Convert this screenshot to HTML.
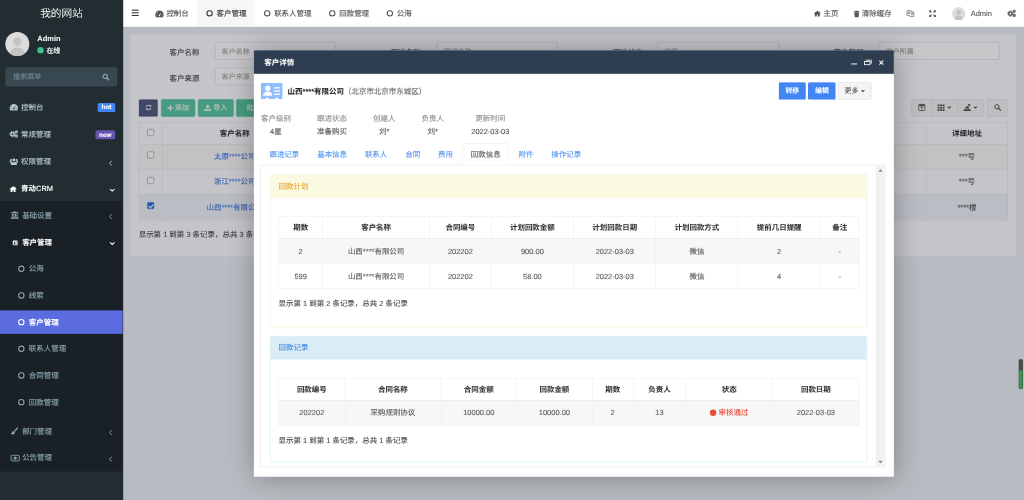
<!DOCTYPE html>
<html lang="zh-CN">
<head>
<meta charset="utf-8">
<title>我的网站</title>
<style>
*{box-sizing:border-box;margin:0;padding:0}
html,body{width:1024px;height:500px;overflow:hidden;background:#222d32}
body{-webkit-text-stroke:.22px;text-rendering:geometricPrecision;font-family:"Liberation Sans","Noto Sans CJK SC",sans-serif;font-size:14px;color:#333;line-height:1.42857}
#stage{filter:blur(.3px);position:absolute;left:0;top:0;width:1920px;height:938px;transform:scale(.533333);transform-origin:0 0;overflow:hidden;background:#ecf0f5}
a{text-decoration:none;color:inherit}
ul{list-style:none}
b,th,.bold{-webkit-text-stroke:.05px}
/* ---------- sidebar ---------- */
.i{display:inline-block;vertical-align:middle;overflow:visible}
#side{position:absolute;left:0;top:0;width:230.7px;z-index:5;height:938px;background:#222d32;color:#fff}
#logo{height:50px;line-height:50px;text-align:center;font-size:20px;color:#fff;font-weight:300}
#user{position:relative;height:65px}
#user .av{position:absolute;left:10px;top:10px;width:45px;height:45px;border-radius:50%;background:#dcdcdc;overflow:hidden}
#user .nm{-webkit-text-stroke:.05px;position:absolute;left:70px;top:12px;font-weight:bold;font-size:14px;line-height:20px}
#user .st{position:absolute;left:70px;top:35px;font-size:13px;line-height:20px;font-weight:500}
#user .st i{display:inline-block;width:12px;height:12px;border-radius:50%;background:#3fc08c;margin-right:5px;vertical-align:-1px}
#sform{position:absolute;left:10px;top:125.5px;width:210px;height:36.5px;background:#374850;border-radius:3px;color:#6f8893;font-size:13px;line-height:36px;padding-left:15px}
#sform .i{position:absolute;right:15px;top:12px;color:#a9bac2}
#menu{position:absolute;left:0;top:0;width:230px}
#menu li{position:absolute;left:0;width:230px;height:44px;line-height:44px;font-size:14px;color:#b8c7ce;padding-left:18px;white-space:nowrap;margin-top:-22px}
#menu li.on{color:#fff;font-weight:bold;-webkit-text-stroke:.05px}
#menu li.l2{padding-left:20px;color:#8aa4af}
#menu li.l2.on{color:#fff}
#menu li.l3{padding-left:34px;color:#8aa4af}
#menu li.l3 .ic{width:20px}
#menu li.act{background:#5a6ce0;color:#fff;font-weight:bold;-webkit-text-stroke:.05px}
#menu .ic{display:inline-block;width:21.5px;text-align:left;vertical-align:top;height:44px}
#menu .ic .i{vertical-align:-2px}
#menu .bd{position:absolute;right:14px;top:14.5px;height:17px;line-height:17px;padding:0 7px;border-radius:3px;font-size:12px;font-weight:bold;color:#fff}
#menu .ar{position:absolute;right:19px;top:3px;height:44px}
#menu .ar .i{vertical-align:-1px}
#subbg{position:absolute;left:0;top:376.5px;width:230px;height:507.5px;background:#1a2126}
/* ---------- topbar ---------- */
#top{position:absolute;left:230px;top:0;width:1690px;height:50px;background:#fff;color:#333;font-size:14px}
#top .hb{position:absolute;left:17px;top:18px;width:13px;height:12px}
#top .hb i{display:block;height:2px;background:#333;margin-bottom:3px}
#tabs{position:absolute;left:45px;top:0;height:50px;display:flex}
#tabs .t{height:50px;line-height:50px;padding:0 15px;color:#555;white-space:nowrap}
#tabs .t.on{background:#f6f6f6;color:#333}
#tabs .t .fw{display:inline-block;width:18px;text-align:center;margin-right:4px}
.co{display:inline-block;width:12px;height:12px;border:2px solid currentColor;border-radius:50%;vertical-align:-1px}
#tr{position:absolute;right:0;top:0;height:50px;line-height:50px;color:#555;white-space:nowrap}
#tr .it{position:absolute;top:0;height:50px;line-height:50px}
#tr .it .i{vertical-align:-2px}
/* ---------- main content ---------- */
#main{position:absolute;left:230px;top:50px;width:1690px;height:888px;background:#ecf0f5;overflow:hidden}
#pn{position:absolute;left:15px;top:15px;width:1660px;height:416px;background:#fbfcff;border-radius:3px}
.lb{position:absolute;font-size:14px;color:#505050;height:33px;line-height:33px;white-space:nowrap;margin-top:3.5px}
.inp{position:absolute;height:33px;border:1px solid #d2d6de;border-radius:3px;background:#fff;font-size:13px;color:#aaa;line-height:34px;padding-left:12px;white-space:nowrap;overflow:hidden}
.btn{position:absolute;height:32.5px;line-height:30.5px;border:1px solid transparent;border-radius:3px;font-size:13px;text-align:center;white-space:nowrap;color:#fff}
.bg{background:#5cc7a3;border-color:#55bd9a;color:rgba(255,255,255,.85)}
.bd2{background:#f4f4f4;border-color:#ddd;color:#505050}
.btn .i{vertical-align:-1.5px}
.caret{display:inline-block;width:0;height:0;border:4px solid transparent;border-top:4px solid currentColor;border-bottom:0;vertical-align:2px;margin-left:1px}
#tb1{position:absolute;left:15px;top:164px;width:1630px;border-collapse:collapse;font-size:14px;color:#555}
#tb1 td,#tb1 th{border:1px solid #e7e7e7;text-align:center;padding:0;height:47.3px;white-space:nowrap}
#tb1 th{height:41px;font-weight:bold;color:#333;padding-top:2.5px}
#tb1 tr.sel td{background:#f0f3fa}
#tb1 tr.odd td{background:#f9f9f9}
#tb1 a{color:#4b7ee0}
.cb{display:inline-block;width:13px;height:13px;border:1px solid #8a8a8a;border-radius:2.5px;background:#fff;vertical-align:middle;position:relative;top:-3.5px}
.cb.ck{background:#2b6fe0;border-color:#2b6fe0}
.cb.ck:after{content:"";position:absolute;left:3.2px;top:.5px;width:3.5px;height:7px;border:solid #fff;border-width:0 2px 2px 0;transform:rotate(42deg)}
#shade{position:absolute;left:0;top:0;width:1690px;height:888px;background:rgba(0,0,8,.22)}
#wid{position:absolute;left:1680px;top:623px;width:8px;height:57px;border-radius:4px;background:#4a4a4a;overflow:hidden}
#wid i{position:absolute;left:1px;right:1px;top:21px;bottom:1px;background:#2e9e4b;border-radius:2px}

/* ---------- modal ---------- */
#md{position:absolute;left:475.7px;top:93.5px;width:1200px;height:800px;background:#fff;box-shadow:1px 1px 50px rgba(0,0,0,.3);border-radius:2px;font-size:14px;color:#333}
#mt{-webkit-text-stroke:.05px;position:absolute;left:0;top:0;width:1200px;height:45.5px;background:#2e3e50;border-bottom:1px solid #26364a;color:#fff;font-weight:bold;line-height:44px;padding-left:20px;border-radius:2px 2px 0 0}
#mt .c{position:absolute;top:0;line-height:0}
#mt .c .i{display:block}
#hic{position:absolute;left:13.5px;top:61.5px;width:41px;height:31px}
#hti{-webkit-text-stroke:.05px;position:absolute;left:63.5px;top:66px;line-height:22px;white-space:nowrap;font-weight:bold;color:#222}
#hti span{-webkit-text-stroke:.22px;font-weight:normal;color:#6e6e6e}
#md .b{-webkit-text-stroke:.05px;position:absolute;top:60px;height:33px;line-height:31px;border:1px solid transparent;border-radius:3px;font-size:13px;font-weight:bold;color:#fff;text-align:center;background:#4285f4}
.inf{position:absolute;top:115px;text-align:center;white-space:nowrap;line-height:25px;color:#545454}
.inf b{display:block;font-weight:normal;color:#919191;-webkit-text-stroke:.22px}
#nt{position:absolute;left:13.5px;top:175px;width:1171px;height:41px;border-bottom:1px solid #ddd;display:flex}
#nt div{height:41px;line-height:40px;padding:0 15px;margin-right:1.5px;color:#5698f3;white-space:nowrap;border:1px solid transparent;border-bottom:none}
#nt div.on{color:#606060;background:#fff;border-color:#d2d2d2;border-radius:4px 4px 0 0}
#sc{position:absolute;left:12.5px;top:216px;width:1172px;height:566px;border:1px solid #e4e4e4;border-top:none;overflow:hidden}
#sb{position:absolute;right:0;top:0;width:17px;height:566px;background:#f1f1f1}
#sb:before{content:"";position:absolute;left:4.5px;top:7px;border:4px solid transparent;border-bottom:5px solid #8a8a8a;border-top:0}
#sb:after{content:"";position:absolute;left:4.5px;bottom:7px;border:4px solid transparent;border-top:5px solid #8a8a8a;border-bottom:0}
.pl{position:absolute;left:17px;width:1120px;border:1px solid;border-radius:4px;background:#fff}
.pl .h{height:43px;line-height:43px;padding-left:15px;border-bottom:1px solid;border-radius:3px 3px 0 0}
.tb{position:absolute;left:15px;border-collapse:collapse;font-size:14px;color:#5c5c5c;table-layout:fixed}
.tb td,.tb th{border:1px solid #eee;text-align:center;padding:2px 0 0;height:47.3px;white-space:nowrap}
.tb th{height:41.3px;padding-top:3px;border-bottom:1.6px solid #e4e4e4;color:#333;font-weight:bold}
.tb tr.odd td{background:#f7f7f7}
.ft{position:absolute;left:15px;line-height:20px;color:#4e4e4e;white-space:nowrap}
</style>
</head>
<body>
<div id="stage">
<div id="side">
  <div id="logo">我的网站</div>
  <div id="user">
    <div class="av"><svg width="45" height="45" viewBox="0 0 45 45"><circle cx="22.5" cy="18" r="8" fill="#c3c3c3"/><ellipse cx="22.5" cy="43" rx="15" ry="14" fill="#c3c3c3"/></svg></div>
    <div class="nm">Admin</div>
    <div class="st"><i></i>在线</div>
  </div>
  <div id="sform">搜索菜单<svg class="i" width="13" height="13" viewBox="0 0 14 14"><circle cx="5.7" cy="5.7" r="4.3" fill="none" stroke="currentColor" stroke-width="1.9"/><path d="M8.8 8.8l4.2 4.2" stroke="currentColor" stroke-width="2.2" stroke-linecap="round"/></svg></div>
  <div id="subbg"></div>
  <ul id="menu">
    <li style="top:200.6px"><span class="ic"><svg class="i" width="16" height="14" viewBox="0 0 16 14"><path d="M8 .8a8 8 0 0 0-8 8c0 1.7.5 3.2 1.4 4.5h13.2A8 8 0 0 0 8 .8z" fill="currentColor"/><circle cx="8" cy="10" r="1.5" fill="#222d32"/><path d="M8 10l2.8-4.6" stroke="#222d32" stroke-width="1.2"/><circle cx="2.7" cy="9" r=".8" fill="#222d32"/><circle cx="4.3" cy="5" r=".8" fill="#222d32"/><circle cx="13.3" cy="9" r=".8" fill="#222d32"/></svg></span>控制台<span class="bd" style="background:#4287f5">hot</span></li>
    <li style="top:251px"><span class="ic"><svg class="i" width="16" height="14" viewBox="0 0 16 14"><circle cx="5.5" cy="7.5" r="3.2" fill="none" stroke="currentColor" stroke-width="2.8"/><circle cx="5.5" cy="7.5" r="5" fill="none" stroke="currentColor" stroke-width="1.8" stroke-dasharray="2.2 1.727"/><circle cx="12.7" cy="3.3" r="1.7" fill="none" stroke="currentColor" stroke-width="1.9"/><circle cx="12.7" cy="3.3" r="2.8" fill="none" stroke="currentColor" stroke-width="1" stroke-dasharray="1.2 1"/><circle cx="12.7" cy="11" r="1.7" fill="none" stroke="currentColor" stroke-width="1.9"/><circle cx="12.7" cy="11" r="2.8" fill="none" stroke="currentColor" stroke-width="1" stroke-dasharray="1.2 1"/></svg></span>常规管理<span class="bd" style="background:#6554b0">new</span></li>
    <li style="top:303px"><span class="ic"><svg class="i" width="16" height="14" viewBox="0 0 16 14"><circle cx="8" cy="4" r="2.8" fill="currentColor"/><path d="M3.6 13.6c-.8 0-1.4-.5-1.4-1.3 0-2.8 1-4.8 2.9-4.8.7.7 1.8 1.2 2.9 1.2s2.2-.5 2.9-1.2c1.9 0 2.9 2 2.9 4.8 0 .8-.6 1.3-1.4 1.3z" fill="currentColor"/><circle cx="2.7" cy="3.8" r="1.9" fill="currentColor"/><circle cx="13.3" cy="3.8" r="1.9" fill="currentColor"/><path d="M0 8.3c0-1.7.6-2.7 1.7-2.7.6.5 1.4.7 2.1.6-.7.7-1.1 1.7-1.2 2.8H.8C.3 9 0 8.8 0 8.3zM16 8.3c0-1.7-.6-2.7-1.7-2.7-.6.5-1.4.7-2.1.6.7.7 1.1 1.7 1.2 2.8h1.8c.5 0 .8-.2.8-.7z" fill="currentColor"/></svg></span>权限管理<span class="ar"><svg class="i" width="7" height="12" viewBox="0 0 7 12"><path d="M5.5 1.5L1.5 6l4 4.5" fill="none" stroke="currentColor" stroke-width="1.7"/></svg></span></li>
    <li class="on" style="top:353.5px"><span class="ic"><svg class="i" width="13" height="12" viewBox="0 0 14 13"><path d="M7 0L0 6l.9 1 1.1-.9V12h3.8V8.2h2.4V12H12V6.1l1.1.9.9-1-2.3-2V1H10v1.6z" fill="currentColor"/></svg></span>青动<span style="font-weight:normal;-webkit-text-stroke:.3px">CRM</span><span class="ar" style="right:14.5px;top:1px"><svg class="i" width="11" height="7.5" viewBox="0 0 12 8"><path d="M1.5 1.5L6 5.7l4.5-4.2" fill="none" stroke="currentColor" stroke-width="2.2"/></svg></span></li>
    <li class="l2" style="top:403px"><span class="ic"><svg class="i" width="15" height="14" viewBox="0 0 15 14"><path d="M7.5 0L15 3v1H0V3zM2 5h2v5H2zM5 5h2v5H5zM8 5h2v5H8zM11 5h2v5h-2zM1 10.5h13V12H1zM0 12.5h15V14H0z" fill="currentColor"/></svg></span>基础设置<span class="ar"><svg class="i" width="7" height="12" viewBox="0 0 7 12"><path d="M5.5 1.5L1.5 6l4 4.5" fill="none" stroke="currentColor" stroke-width="1.7"/></svg></span></li>
    <li class="l2 on" style="top:453.7px"><span class="ic"><span style="display:inline-block;width:3.5px"></span><svg class="i" width="9" height="11" viewBox="0 0 13 13"><path d="M1 0h11a1 1 0 0 1 1 1v11a1 1 0 0 1-1 1H1a1 1 0 0 1-1-1V1a1 1 0 0 1 1-1z" fill="currentColor"/><circle cx="5" cy="4.7" r="1.9" fill="#1a2226"/><path d="M1.8 10.5c0-2 1.2-3.2 3.2-3.2s3.2 1.2 3.2 3.2z" fill="#1a2226"/><rect x="9.3" y="3" width="2.4" height="1.3" fill="#1a2226"/><rect x="9.3" y="6" width="2.4" height="1.3" fill="#1a2226"/><rect x="9.3" y="9" width="2.4" height="1.3" fill="#1a2226"/></svg></span>客户管理<span class="ar" style="right:14.5px;top:1px"><svg class="i" width="11" height="7.5" viewBox="0 0 12 8"><path d="M1.5 1.5L6 5.7l4.5-4.2" fill="none" stroke="currentColor" stroke-width="2.2"/></svg></span></li>
    <li class="l3" style="top:503.5px"><span class="ic"><span class="co"></span></span>公海</li>
    <li class="l3" style="top:553.5px"><span class="ic"><span class="co"></span></span>线索</li>
    <li class="l3 act" style="top:603.5px"><span class="ic"><span class="co"></span></span>客户管理</li>
    <li class="l3" style="top:653.5px"><span class="ic"><span class="co"></span></span>联系人管理</li>
    <li class="l3" style="top:703.5px"><span class="ic"><span class="co"></span></span>合同管理</li>
    <li class="l3" style="top:753.5px"><span class="ic"><span class="co"></span></span>回款管理</li>
    <li class="l2" style="top:808px"><span class="ic"><svg class="i" width="14" height="14" viewBox="0 0 14 14"><path d="M13 0c.6 0 1 .4 1 1 0 .3-.1.6-.3.9L9 8.6 6.7 6.5 12.2.4C12.4.1 12.7 0 13 0z" fill="currentColor"/><path d="M5.9 7.3L8.1 9.4c.1 2.2-1.3 4.3-4 4.3C1.6 13.7.3 12 0 10.7c.8.5 1.8.3 2.4-.5.6-.8.7-1.5 1.5-2.2.6-.5 1.3-.7 2-.7z" fill="currentColor"/></svg></span>部门管理<span class="ar"><svg class="i" width="7" height="12" viewBox="0 0 7 12"><path d="M5.5 1.5L1.5 6l4 4.5" fill="none" stroke="currentColor" stroke-width="1.7"/></svg></span></li>
    <li class="l2" style="top:858px"><span class="ic"><svg class="i" width="17" height="12" viewBox="0 0 17 12"><rect x=".8" y=".8" width="15.4" height="10.4" rx="1" fill="none" stroke="currentColor" stroke-width="1.6"/><ellipse cx="8.5" cy="6" rx="2.6" ry="3.2" fill="currentColor"/><rect x="3" y="5.2" width="1.6" height="1.6" fill="currentColor"/><rect x="12.4" y="5.2" width="1.6" height="1.6" fill="currentColor"/></svg></span>公告管理<span class="ar"><svg class="i" width="7" height="12" viewBox="0 0 7 12"><path d="M5.5 1.5L1.5 6l4 4.5" fill="none" stroke="currentColor" stroke-width="1.7"/></svg></span></li>
  </ul>
</div>
<div id="top">
  <div class="hb"><i></i><i></i><i></i></div>
  <div id="tabs">
    <div class="t"><span class="fw"><svg class="i" width="16" height="14" viewBox="0 0 16 14"><path d="M8 .8a8 8 0 0 0-8 8c0 1.7.5 3.2 1.4 4.5h13.2A8 8 0 0 0 8 .8z" fill="currentColor"/><circle cx="8" cy="10" r="1.5" fill="#fff"/><path d="M8 10l2.8-4.6" stroke="#fff" stroke-width="1.2"/><circle cx="2.7" cy="9" r=".8" fill="#fff"/><circle cx="4.3" cy="5" r=".8" fill="#fff"/><circle cx="13.3" cy="9" r=".8" fill="#fff"/></svg></span>控制台</div>
    <div class="t on"><span class="fw"><span class="co"></span></span>客户管理</div>
    <div class="t"><span class="fw"><span class="co"></span></span>联系人管理</div>
    <div class="t"><span class="fw"><span class="co"></span></span>回款管理</div>
    <div class="t"><span class="fw"><span class="co"></span></span>公海</div>
  </div>
  <div id="tr">
    <span class="it" style="left:-394px"><svg class="i" width="13" height="12" viewBox="0 0 14 13"><path d="M7 0L0 6l.9 1 1.1-.9V12h3.8V8.2h2.4V12H12V6.1l1.1.9.9-1-2.3-2V1H10v1.6z" fill="currentColor"/></svg></span>
    <span class="it" style="left:-376px">主页</span>
    <span class="it" style="left:-319.5px"><svg class="i" width="10.5" height="12.5" viewBox="0 0 12 14"><path d="M4 0h4l.7 1.3H12V3H0V1.3h3.3zM1 4h10l-.7 9c0 .6-.5 1-1 1H2.7c-.6 0-1-.4-1-1z" fill="currentColor"/></svg></span>
    <span class="it" style="left:-304px">清除缓存</span>
    <span class="it" style="left:-220px"><svg class="i" width="14" height="13" viewBox="0 0 15 14"><path d="M.6 1h8v2.5h5.8v9.5H6v-2.5H.6z" fill="none" stroke="currentColor" stroke-width="1.2"/><path d="M2.3 8L4.5 3l2.2 5M3 6.4h3" fill="none" stroke="currentColor" stroke-width="1.2"/><path d="M8.6 6h4.6M10.8 5v1M9.3 6c.3 2 1.5 3.5 3.3 4.5M12.3 6c-.3 2-1.5 3.5-3.3 4.5" fill="none" stroke="currentColor" stroke-width="1"/></svg></span>
    <span class="it" style="left:-178px"><svg class="i" width="13" height="13" viewBox="0 0 14 14"><path d="M0 0h5L3.3 1.7l2.5 2.5-1.6 1.6-2.5-2.5L0 5zM14 0v5l-1.7-1.7-2.5 2.5-1.6-1.6 2.5-2.5L9 0zM0 14V9l1.7 1.7 2.5-2.5 1.6 1.6-2.5 2.5L5 14zM14 14H9l1.7-1.7-2.5-2.5 1.6-1.6 2.5 2.5L14 9z" fill="currentColor"/></svg></span>
    <span class="it" style="left:-135px;top:12.5px;width:25px;height:25px;border-radius:50%;background:#dcdcdc;overflow:hidden"><svg width="25" height="25" viewBox="0 0 45 45" style="display:block"><circle cx="22.5" cy="18" r="8" fill="#c3c3c3"/><ellipse cx="22.5" cy="43" rx="15" ry="14" fill="#c3c3c3"/></svg></span>
    <span class="it" style="left:-100px">Admin</span>
    <span class="it" style="left:-31px"><svg class="i" width="16" height="14" viewBox="0 0 16 14"><circle cx="5.5" cy="7.5" r="3.2" fill="none" stroke="currentColor" stroke-width="2.8"/><circle cx="5.5" cy="7.5" r="5" fill="none" stroke="currentColor" stroke-width="1.8" stroke-dasharray="2.2 1.727"/><circle cx="12.7" cy="3.3" r="1.7" fill="none" stroke="currentColor" stroke-width="1.9"/><circle cx="12.7" cy="3.3" r="2.8" fill="none" stroke="currentColor" stroke-width="1" stroke-dasharray="1.2 1"/><circle cx="12.7" cy="11" r="1.7" fill="none" stroke="currentColor" stroke-width="1.9"/><circle cx="12.7" cy="11" r="2.8" fill="none" stroke="currentColor" stroke-width="1" stroke-dasharray="1.2 1"/></svg></span>
  </div>
</div>

<div id="main">
  <div id="pn">
    <div class="lb" style="left:73px;top:14px">客户名称</div>
    <div class="inp" style="left:158px;top:14px;width:226px">客户名称</div>
    <div class="lb" style="left:73px;top:62px">客户来源</div>
    <div class="inp" style="left:158px;top:62px;width:226px">客户来源</div>
    <div class="lb" style="left:488px;top:14px">跟进名称</div>
    <div class="inp" style="left:574px;top:14px;width:226px">跟进名称</div>
    <div class="lb" style="left:904px;top:14px">跟进状态</div>
    <div class="inp" style="left:987.5px;top:14px;width:228px">选择</div>
    <div class="lb" style="left:1318px;top:14px">客户所属</div>
    <div class="inp" style="left:1403px;top:14px;width:226px">客户所属</div>
    <div class="btn" style="left:15px;top:121px;width:36px;background:#535d82"><svg class="i" width="13" height="13" viewBox="0 0 13 13"><path d="M6.5 1.2a5.3 5.3 0 0 1 3.7 1.5L11.5 1.4V5.2H7.7l1.3-1.3a3.6 3.6 0 0 0-6 1.5H1.3a5.3 5.3 0 0 1 5.2-4.2zM6.5 11.8a5.3 5.3 0 0 1-3.7-1.5L1.5 11.6V7.8H5.3L4 9.1a3.6 3.6 0 0 0 6-1.5h1.7a5.3 5.3 0 0 1-5.2 4.2z" fill="currentColor"/></svg></div>
    <div class="btn bg" style="left:57px;top:121px;width:64px"><svg class="i" width="11" height="11" viewBox="0 0 11 11"><path d="M4.2 0h2.6v4.2H11v2.6H6.8V11H4.2V6.8H0V4.2h4.2z" fill="currentColor"/></svg> 添加</div>
    <div class="btn bg" style="left:126px;top:121px;width:67px"><svg class="i" width="13" height="12" viewBox="0 0 13 12"><path d="M6.5 0L11 4.5H8.3V8H4.7V4.5H2zM0 8.5h3.5v1h6v-1H13V12H0z" fill="currentColor"/></svg> 导入</div>
    <div class="btn bg" style="left:198px;top:121px;width:90px">批量导入</div>
    <div class="btn bd2" style="left:1464px;top:121px;width:38px;border-radius:3px 0 0 3px"><svg class="i" width="13" height="13" viewBox="0 0 13 13"><rect x=".7" y=".7" width="11.6" height="11.6" rx="1" fill="none" stroke="currentColor" stroke-width="1.4"/><rect x="1" y="1" width="11" height="2.6" fill="currentColor"/><rect x="3" y="5" width="7" height="1.3" fill="currentColor"/><rect x="5.8" y="5" width="1.4" height="6" fill="currentColor"/></svg></div>
    <div class="btn bd2" style="left:1501px;top:121px;width:50px;border-radius:0"><svg class="i" width="13" height="12" viewBox="0 0 13 12"><path d="M0 0h3.5v3.2H0zM4.7 0h3.5v3.2H4.7zM9.4 0H13v3.2H9.4zM0 4.4h3.5v3.2H0zM4.7 4.4h3.5v3.2H4.7zM9.4 4.4H13v3.2H9.4zM0 8.8h3.5V12H0zM4.7 8.8h3.5V12H4.7zM9.4 8.8H13V12H9.4z" fill="currentColor"/></svg> <i class="caret"></i></div>
    <div class="btn bd2" style="left:1550px;top:121px;width:50px;border-radius:0 3px 3px 0"><svg class="i" width="13" height="13" viewBox="0 0 13 13"><path d="M0 10h13v3H0z" fill="currentColor"/><path d="M2 8.5L4 5h5l2 3.5z" fill="currentColor"/><path d="M12 0v4.5L10.5 3 7 6.3 5.8 5.1 9.2 1.7 7.6 0z" fill="currentColor"/></svg> <i class="caret"></i></div>
    <div class="btn bd2" style="left:1606px;top:121px;width:39px"><svg class="i" width="13" height="13" viewBox="0 0 14 14"><circle cx="5.7" cy="5.7" r="4.3" fill="none" stroke="currentColor" stroke-width="1.9"/><path d="M8.8 8.8l4.2 4.2" stroke="currentColor" stroke-width="2.2" stroke-linecap="round"/></svg></div>
    <table id="tb1">
      <tr><th style="width:44px"><span class="cb"></span></th><th style="width:271px">客户名称</th><th></th><th style="width:153px">详细地址</th></tr>
      <tr class="odd"><td><span class="cb"></span></td><td><a>太原****公司</a></td><td></td><td>***号</td></tr>
      <tr><td><span class="cb"></span></td><td><a>浙江****公司</a></td><td></td><td>***号</td></tr>
      <tr class="sel"><td><span class="cb ck"></span></td><td><a>山西****有限公司</a></td><td></td><td>****楼</td></tr>
    </table>
    <div class="lb" style="left:15px;top:355.5px;color:#555">显示第 1 到第 3 条记录，总共 3 条记录</div>
  </div>
  <div id="shade"></div>
  <div id="wid"><i></i></div>
</div>

<div id="md">
  <div id="mt">客户详情<span class="c" style="left:1120px;top:25px"><svg class="i" width="11" height="2" viewBox="0 0 11 2"><rect x="0" y="0" width="11" height="1.8" fill="currentColor"/></svg></span><span class="c" style="left:1144px;top:18.5px"><svg class="i" width="14.5" height="10" viewBox="0 0 14.5 10"><path d="M3.5 .75h10.25v6h-2" fill="none" stroke="currentColor" stroke-width="1.5"/><rect x=".75" y="3" width="10.5" height="6.25" fill="none" stroke="currentColor" stroke-width="1.5"/><rect x=".75" y="3" width="10.5" height="1.2" fill="currentColor"/></svg></span><span class="c" style="left:1172.5px;top:19.5px"><svg class="i" width="9" height="9" viewBox="0 0 9 9"><path d="M.8 .8l7.4 7.4M8.2 .8l-7.4 7.4" stroke="currentColor" stroke-width="1.9"/></svg></span></div>
  <div id="hic"><svg width="41" height="31" viewBox="0 0 41 31"><path d="M3 0h35a3 3 0 0 1 3 3v25a3 3 0 0 1-3 3h-5.5v-2.5h-5V31h-13v-2.5h-5V31H3a3 3 0 0 1-3-3V3a3 3 0 0 1 3-3z" fill="#8ebeff"/><circle cx="13" cy="10.5" r="5" fill="#fff"/><path d="M4.5 24.5c0-5.5 3.5-8 8.5-8s8.5 2.5 8.5 8z" fill="#fff"/><rect x="25" y="8.5" width="11" height="2.4" fill="#fff"/><rect x="25" y="14.5" width="11" height="2.4" fill="#fff"/><rect x="25" y="20.5" width="11" height="2.4" fill="#fff"/></svg></div>
  <div id="hti">山西****有限公司<span>（北京市北京市东城区）</span></div>
  <div class="b" style="left:984.5px;width:51px">转移</div>
  <div class="b" style="left:1039.5px;width:52px">编辑</div>
  <div class="b" style="left:1095.5px;width:63px;background:#f4f4f4;border-color:#ddd;color:#444;font-weight:normal">更多 <i class="caret"></i></div>
  <div class="inf" style="left:13.7px;width:56px"><b>客户级别</b>4星</div>
  <div class="inf" style="left:118.7px;width:56px"><b>跟进状态</b>准备购买</div>
  <div class="inf" style="left:223.7px;width:42px"><b>创建人</b>刘*</div>
  <div class="inf" style="left:314.7px;width:42px"><b>负责人</b>刘*</div>
  <div class="inf" style="left:406.7px;width:74px"><b>更新时间</b>2022-03-03</div>
  <div id="nt"><div>跟进记录</div><div>基本信息</div><div>联系人</div><div>合同</div><div>费用</div><div class="on">回款信息</div><div>附件</div><div>操作记录</div></div>
  <div id="sc">
    <div class="pl" style="top:17px;height:286.5px;border-color:#f8e6c6">
      <div class="h" style="background:#fbf9e1;border-color:#f8edcb;color:#e8a838">回款计划</div>
      <table class="tb" style="top:78px;width:1089px">
        <tr><th style="width:82px">期数</th><th style="width:201px">客户名称</th><th style="width:115px">合同编号</th><th style="width:155px">计划回款金额</th><th style="width:154px">计划回款日期</th><th style="width:154px">计划回款方式</th><th style="width:154.5px">提前几日提醒</th><th>备注</th></tr>
        <tr class="odd"><td>2</td><td>山西****有限公司</td><td>202202</td><td>900.00</td><td>2022-03-03</td><td>微信</td><td>2</td><td>-</td></tr>
        <tr><td>599</td><td>山西****有限公司</td><td>202202</td><td>58.00</td><td>2022-03-03</td><td>微信</td><td>4</td><td>-</td></tr>
      </table>
      <div class="ft" style="top:230.5px">显示第 1 到第 2 条记录，总共 2 条记录</div>
    </div>
    <div class="pl" style="top:320px;height:237px;border-color:#bce8f1">
      <div class="h" style="background:#d9edf7;border-color:#bce8f1;color:#4a90e2">回款记录</div>
      <table class="tb" style="top:78px;width:1089px">
        <tr><th style="width:124px">回款编号</th><th style="width:180px">合同名称</th><th style="width:142px">合同金额</th><th style="width:141.6px">回款金额</th><th style="width:77px">期数</th><th style="width:98.5px">负责人</th><th style="width:163px">状态</th><th>回款日期</th></tr>
        <tr class="odd"><td>202202</td><td>采购规则协议</td><td>10000.00</td><td>10000.00</td><td>2</td><td>13</td><td style="color:#e74c3c"><i style="display:inline-block;width:12px;height:12px;border-radius:50%;background:#e74c3c;margin-right:4px;vertical-align:-1px"></i>审核通过</td><td>2022-03-03</td></tr>
      </table>
      <div class="ft" style="top:184.5px">显示第 1 到第 1 条记录，总共 1 条记录</div>
    </div>
    <div id="sb"></div>
  </div>
</div>

</div>
</body>
</html>
